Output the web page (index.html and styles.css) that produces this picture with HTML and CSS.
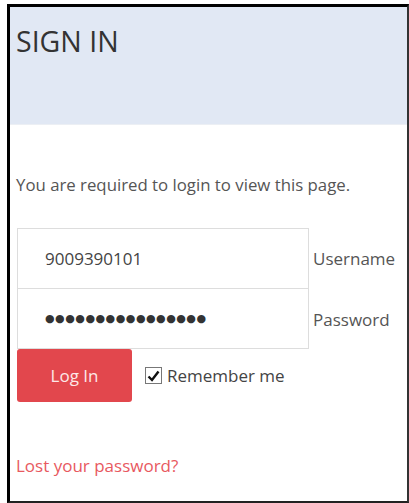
FILE: index.html
```html
<!DOCTYPE html>
<html lang="en">
<head>
<meta charset="utf-8">
<title>Sign In</title>
<link rel="stylesheet" href="styles.css">
</head>
<body>
<div class="frame">
  <header class="page-head">
    <h1 class="page-title">SIGN IN</h1>
  </header>
  <main class="content">
    <p class="notice">You are required to login to view this page.</p>
    <form class="login-form">
      <div class="field-row">
        <div class="field-box"><span class="field-value">9009390101</span></div>
        <label class="field-label">Username</label>
      </div>
      <div class="field-row">
        <div class="field-box"><span class="field-value dots">&#9679;&#9679;&#9679;&#9679;&#9679;&#9679;&#9679;&#9679;&#9679;&#9679;&#9679;&#9679;&#9679;&#9679;&#9679;&#9679;</span></div>
        <label class="field-label">Password</label>
      </div>
      <div class="actions">
        <button type="button" class="btn-login">Log In</button>
        <label class="remember">
          <span class="checkbox">
            <svg width="13" height="12" viewBox="0 0 13 12"><path d="M1.5 6.5 L5 10 L11.5 1.5" fill="none" stroke="#111" stroke-width="2.4"/></svg>
          </span>
          Remember me
        </label>
      </div>
    </form>
    <a class="lost-link" href="#">Lost your password?</a>
  </main>
</div>
</body>
</html>
```
FILE: styles.css
```css
html, body {
  margin: 0;
  padding: 0;
  background: #fff;
}
body {
  padding: 4px 0 0 7px;
  font-family: "Open Sans", "Noto Sans", sans-serif;
  color: #555;
}
.frame {
  box-sizing: border-box;
  height: 499px;
  border-top: 3px solid #000;
  border-left: 3px solid #000;
  border-right: 2px solid #333;
  border-bottom: 2px solid #222;
  display: flex;
  flex-direction: column;
}
.page-head {
  height: 117px;
  background: #e1e8f4;
  border-bottom: 1px solid #eceff4;
  padding: 0 6px;
}
.page-title {
  margin: 0;
  padding-top: 16px;
  font-size: 28.5px;
  font-weight: 400;
  line-height: 36px;
  color: #333;
}
.content {
  padding: 0 7px;
}
.notice {
  margin: 49px 0 0 -1px;
  font-size: 16.8px;
  line-height: 22px;
  color: #555;
}
.login-form {
  margin-top: 32px;
}
.field-row {
  display: flex;
  align-items: center;
}
.field-box {
  box-sizing: border-box;
  width: 292px;
  height: 61px;
  border: 1px solid #ddd;
  display: flex;
  align-items: center;
  padding-left: 27px;
  background: #fff;
}
.field-row + .field-row .field-box {
  margin-top: -1px;
}
.field-value {
  font-size: 17px;
  color: #444;
}
.dots {
  font-size: 11px;
  letter-spacing: 0.5px;
  color: #333;
  font-family: "DejaVu Sans", sans-serif;
}
.field-label {
  margin-left: 4px;
  font-size: 17px;
  color: #555;
}
.actions {
  display: flex;
  align-items: center;
}
.btn-login {
  width: 115px;
  height: 53px;
  border: none;
  border-radius: 3px;
  background: #e2474d;
  color: #fde8e8;
  font-family: inherit;
  font-size: 17px;
  padding: 0;
}
.remember {
  display: flex;
  align-items: center;
  margin-left: 13px;
  font-size: 17px;
  color: #444;
  gap: 5px;
}
.checkbox {
  box-sizing: border-box;
  width: 17px;
  height: 17px;
  border: 1px solid #777;
  display: flex;
  align-items: center;
  justify-content: center;
  background: #fff;
}
.lost-link {
  display: block;
  margin: 52px 0 0 -1px;
  font-size: 17px;
  color: #e8595f;
  text-decoration: none;
}
```
